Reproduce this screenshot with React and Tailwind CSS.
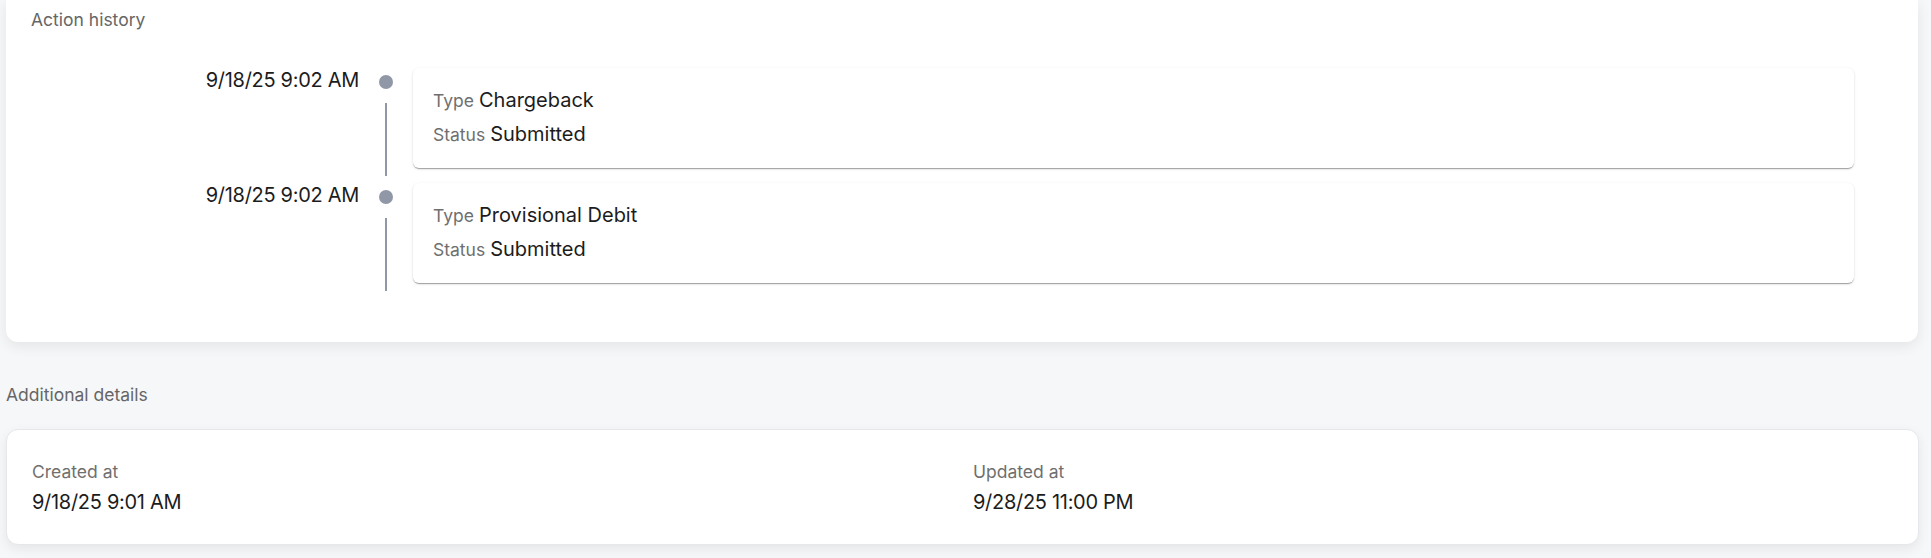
import React from 'react'

const events = [
    { at: '9/18/25 9:02 AM', type: 'Chargeback', status: 'Submitted' },
    { at: '9/18/25 9:02 AM', type: 'Provisional Debit', status: 'Submitted' },
]

function Field({ label, value }) {
    return (
        <div className="flex items-baseline gap-[5px] h-[30px] leading-[30px] whitespace-nowrap">
            <span className="text-[17.5px] text-[#6f6f6f]">{label}</span>
            <span className="text-[20px] text-[#1c1c1c]">{value}</span>
        </div>
    )
}

function TimelineRow({ event }) {
    return (
        <div className="flex items-stretch">
            <div className="w-[328px] shrink-0 text-right text-[20px] leading-[24px] tracking-[-0.3px] text-[#1c1c1c] whitespace-nowrap">
                {event.at}
            </div>
            <div className="ml-[20px] w-[14px] shrink-0 flex flex-col items-center pt-[7px] pb-[7px]">
                <div className="w-[14px] h-[14px] rounded-full bg-[#9097a6]" />
                <div className="mt-[14px] w-[2px] flex-1 bg-[#9097a6]" />
            </div>
            <div className="ml-[20px] flex-1 mb-[15px]">
                <div className="h-[100px] bg-white rounded-[6px] pt-[17px] px-[20px] flex flex-col gap-[4px] shadow-[0_2px_1px_-1px_rgba(0,0,0,0.2),0_1px_1px_0_rgba(0,0,0,0.14),0_1px_3px_0_rgba(0,0,0,0.12)]">
                    <Field label="Type" value={event.type} />
                    <Field label="Status" value={event.status} />
                </div>
            </div>
        </div>
    )
}

export default function App() {
    return (
        <div
            className="w-full h-[558px] overflow-hidden bg-[#f6f7f9] pl-[6px] pr-[13px]"
            style={{ fontFamily: 'Inter, "Liberation Sans", sans-serif' }}
        >
            <section className="bg-white rounded-b-[12px] pt-[7px] pb-[44px] pl-[25px] pr-[64px] shadow-[0_4px_14px_rgba(0,0,0,0.08)]">
                <h2 className="text-[17.5px] leading-[26px] text-[#666666] font-normal">Action history</h2>
                <div className="mt-[35px]">
                    {events.map((e, i) => (
                        <TimelineRow key={i} event={e} />
                    ))}
                </div>
            </section>

            <h2 className="mt-[40px] text-[17.5px] leading-[26px] text-[#666666] font-normal">Additional details</h2>

            <section className="mt-[21px] mr-[-1px] bg-white border border-[#e6e7ea] rounded-[12px] pt-[29px] pb-[28px] px-[25px] shadow-[0_4px_12px_rgba(0,0,0,0.07)]">
                <div className="grid grid-cols-2 gap-x-[21px]">
                    <div>
                        <div className="text-[17.5px] leading-[26px] text-[#6f6f6f]">Created at</div>
                        <div className="mt-[3px] text-[20px] leading-[28px] tracking-[-0.3px] text-[#1c1c1c]">9/18/25 9:01 AM</div>
                    </div>
                    <div>
                        <div className="text-[17.5px] leading-[26px] text-[#6f6f6f]">Updated at</div>
                        <div className="mt-[3px] text-[20px] leading-[28px] tracking-[-0.3px] text-[#1c1c1c]">9/28/25 11:00 PM</div>
                    </div>
                </div>
            </section>
        </div>
    )
}
